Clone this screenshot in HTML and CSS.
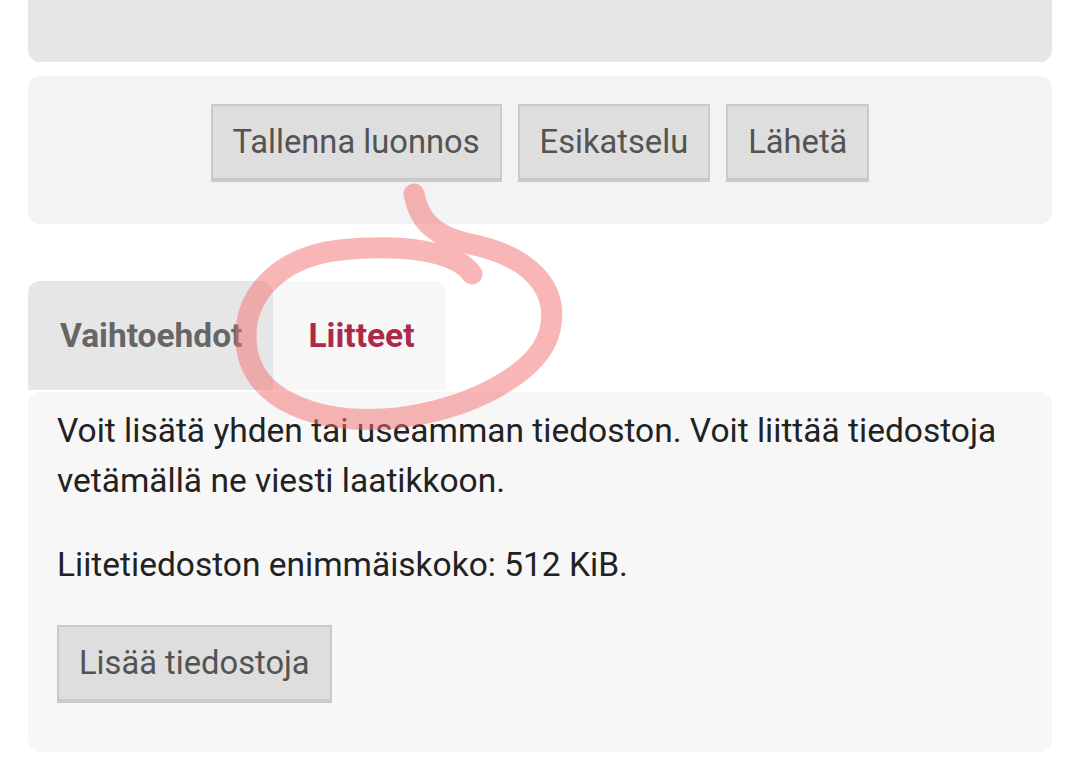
FILE: index.html
```html
<!DOCTYPE html>
<html lang="fi">
<head>
<meta charset="utf-8">
<title>Liitteet</title>
<link rel="stylesheet" href="styles.css">
</head>
<body>
<div class="page">
  <div class="panel-top"></div>
  <div class="panel-actions">
    <button class="btn">Tallenna luonnos</button>
    <button class="btn">Esikatselu</button>
    <button class="btn">Lähetä</button>
  </div>
  <div class="tabs">
    <div class="tab">Vaihtoehdot</div>
    <div class="tab active">Liitteet</div>
  </div>
  <div class="panel-content">
    <p class="text">Voit lisätä yhden tai useamman tiedoston. Voit liittää tiedostoja vetämällä ne viesti laatikkoon.</p>
    <p class="text">Liitetiedoston enimmäiskoko: 512 KiB.</p>
    <button class="btn">Lisää tiedostoja</button>
  </div>
</div>
<svg class="scribble" width="1080" height="784" viewBox="0 0 1080 784">
  <path d="M 414 194 C 418 215, 428 235, 470 244 C 525 255, 560 285, 550 330 C 540 372, 474 408, 398 418 C 318 426, 248 400, 246 340 C 244 290, 285 256, 340 250 C 400 244, 455 250, 472 274" />
</svg>
</body>
</html>
```
FILE: styles.css
```css
html, body {
  margin: 0;
  padding: 0;
  background: #ffffff;
}
body {
  font-family: Roboto, "Liberation Sans", sans-serif;
  position: relative;
  width: 1080px;
  height: 784px;
  overflow: hidden;
}
.page {
  padding: 0 28px;
}
.panel-top {
  height: 62px;
  background: #e6e6e6;
  border-radius: 0 0 12px 12px;
}
.panel-actions {
  margin-top: 14px;
  background: #f3f3f3;
  border-radius: 12px;
  padding: 28px 0 42px;
  display: flex;
  justify-content: center;
  gap: 16px;
}
.btn {
  font-family: Roboto, "Liberation Sans", sans-serif;
  font-size: 32.7px;
  line-height: 38px;
  color: #535353;
  background: #dedede;
  border: 2px solid #c9c9c9;
  border-bottom-width: 4px;
  border-radius: 0;
  padding: 17px 20px;
  margin: 0;
}
.tabs {
  margin-top: 57px;
  display: flex;
}
.tab {
  height: 109px;
  display: flex;
  align-items: center;
  padding: 0 31px 0 32px;
  font-size: 33.5px;
  font-weight: 700;
  color: #666666;
  background: #e6e6e6;
  border-radius: 12px 12px 0 0;
}
.tab.active {
  color: #ab294b;
  background: #f7f7f7;
  padding: 0 31px 0 35px;
}
.panel-content {
  margin-top: 2px;
  background: #f7f7f7;
  border-radius: 12px;
  padding: 14px 29px 0;
  height: 346px;
}
.text {
  margin: 0 0 34px;
  font-size: 33.5px;
  line-height: 50px;
  color: #222222;
}
.text + .btn {
  margin-top: 1px;
}
.scribble {
  position: absolute;
  left: 0;
  top: 0;
  pointer-events: none;
}
.scribble path {
  fill: none;
  stroke: rgba(242, 110, 110, 0.5);
  stroke-width: 21;
  stroke-linecap: round;
  stroke-linejoin: round;
}
```
